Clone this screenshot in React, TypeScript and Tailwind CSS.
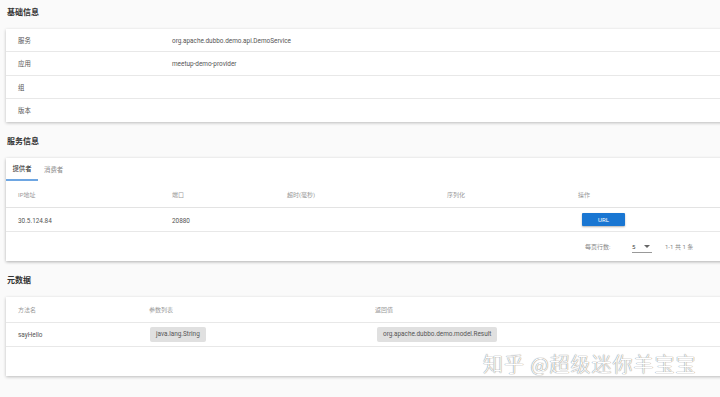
import React from 'react';

const font = { fontFamily: 'Roboto, "Noto Sans CJK SC", sans-serif' };

function Section({ title, children }: { title: string; children: React.ReactNode }) {
  return (
    <div>
      <h2 className="h-[29px] pl-[7px] pt-[7px] text-[8px] font-bold text-[#333]">{title}</h2>
      {children}
    </div>
  );
}

function Chip({ text }: { text: string }) {
  return <span className="inline-flex h-[15px] items-center rounded-[2px] bg-[#e0e0e0] px-[6px] text-[6.4px] text-[#555]">{text}</span>;
}

export default function App() {
  return (
    <div className="relative h-[397px] w-[720px] overflow-hidden bg-[#fafafa]" style={font}>
      <Section title="基础信息">
        <div className="ml-[6px] mr-[-4px] bg-white text-[6.4px] text-[#555] shadow-[0_1px_3px_rgba(0,0,0,0.25)]">
          {[
            ['服务', 'org.apache.dubbo.demo.api.DemoService', 'h-[23px]'],
            ['应用', 'meetup-demo-provider', 'h-[24px]'],
            ['组', '', 'h-[23px]'],
            ['版本', '', 'h-[23px]'],
          ].map(([k, v, h], i) => (
            <div key={k} className={`flex items-center pt-[3px] ${h} ${i < 3 ? 'border-b border-[#e8e8e8]' : ''}`}>
              <span className="w-[166px] pl-[12px]">{k}</span>
              <span>{v}</span>
            </div>
          ))}
        </div>
      </Section>

      <div className="h-[7px]" />
      <Section title="服务信息">
        <div className="ml-[6px] mr-[-4px] bg-white text-[6.4px] text-[#555] shadow-[0_1px_3px_rgba(0,0,0,0.3)]">
          <div className="flex h-[23px] items-stretch">
            <div className="flex w-[32px] items-center justify-center border-b-2 border-[#6ea6e2] pt-[3px] text-[#222]">提供者</div>
            <div className="flex items-center px-[6px] pt-[3px] text-[#888]">消费者</div>
          </div>
          <div className="flex h-[27px] items-center border-b border-[#e3e3e3] text-[6px] text-[#999]">
            <span className="w-[166px] pl-[12px]">IP地址</span>
            <span className="w-[115px]">端口</span>
            <span className="w-[160px]">超时(毫秒)</span>
            <span className="w-[131px]">序列化</span>
            <span>操作</span>
          </div>
          <div className="flex h-[24px] items-center border-b border-[#e8e8e8]">
            <span className="w-[166px] pl-[12px] pt-[4px]">30.5.124.84</span>
            <span className="w-[115px] pt-[4px]">20880</span>
            <span className="w-[160px]"></span>
            <span className="w-[135px]"></span>
            <span className="flex h-[13px] w-[43px] items-center justify-center rounded-[1px] bg-[#1976d2] text-[6px] text-white shadow-[0_1px_2px_rgba(0,0,0,0.3)]">URL</span>
          </div>
          <div className="flex h-[29px] items-center text-[6px] text-[#888]">
            <span className="ml-[579px] w-[47px]">每页行数:</span>
            <span className="flex w-[20px] items-center justify-between border-b border-[#999] pb-[1px] pt-[2px] text-[#444]">
              <span>5</span>
              <svg width="6" height="4" viewBox="0 0 6 4" className="mr-[2px]"><path d="M0 0h6L3 3z" fill="#666" /></svg>
            </span>
            <span className="ml-[13px]">1-1 共 1 条</span>
          </div>
        </div>
      </Section>

      <div className="h-[7px]" />
      <Section title="元数据">
        <div className="ml-[6px] mr-[-4px] h-[79px] bg-white text-[6.4px] text-[#555] shadow-[0_1px_3px_rgba(0,0,0,0.25)]">
          <div className="flex h-[26px] items-center border-b border-[#e8e8e8] text-[6px] text-[#999]">
            <span className="w-[143px] pl-[12px]">方法名</span>
            <span className="w-[226px]">参数列表</span>
            <span>返回值</span>
          </div>
          <div className="flex h-[24px] items-center border-b border-[#e8e8e8]">
            <span className="w-[144px] pl-[12px] pt-[3px]">sayHello</span>
            <span className="w-[227px]"><Chip text="java.lang.String" /></span>
            <Chip text="org.apache.dubbo.demo.model.Result" />
          </div>
        </div>
      </Section>

      <div
        className="absolute left-[483px] top-[354px] text-[20px] font-light leading-none tracking-[1px] text-white"
        style={{ textShadow: '0 0 1px #888, 0 0 1px #888', fontFamily: '"Noto Sans CJK SC", sans-serif' }}
      >
        知乎 @超级迷你羊宝宝
      </div>
    </div>
  );
}
